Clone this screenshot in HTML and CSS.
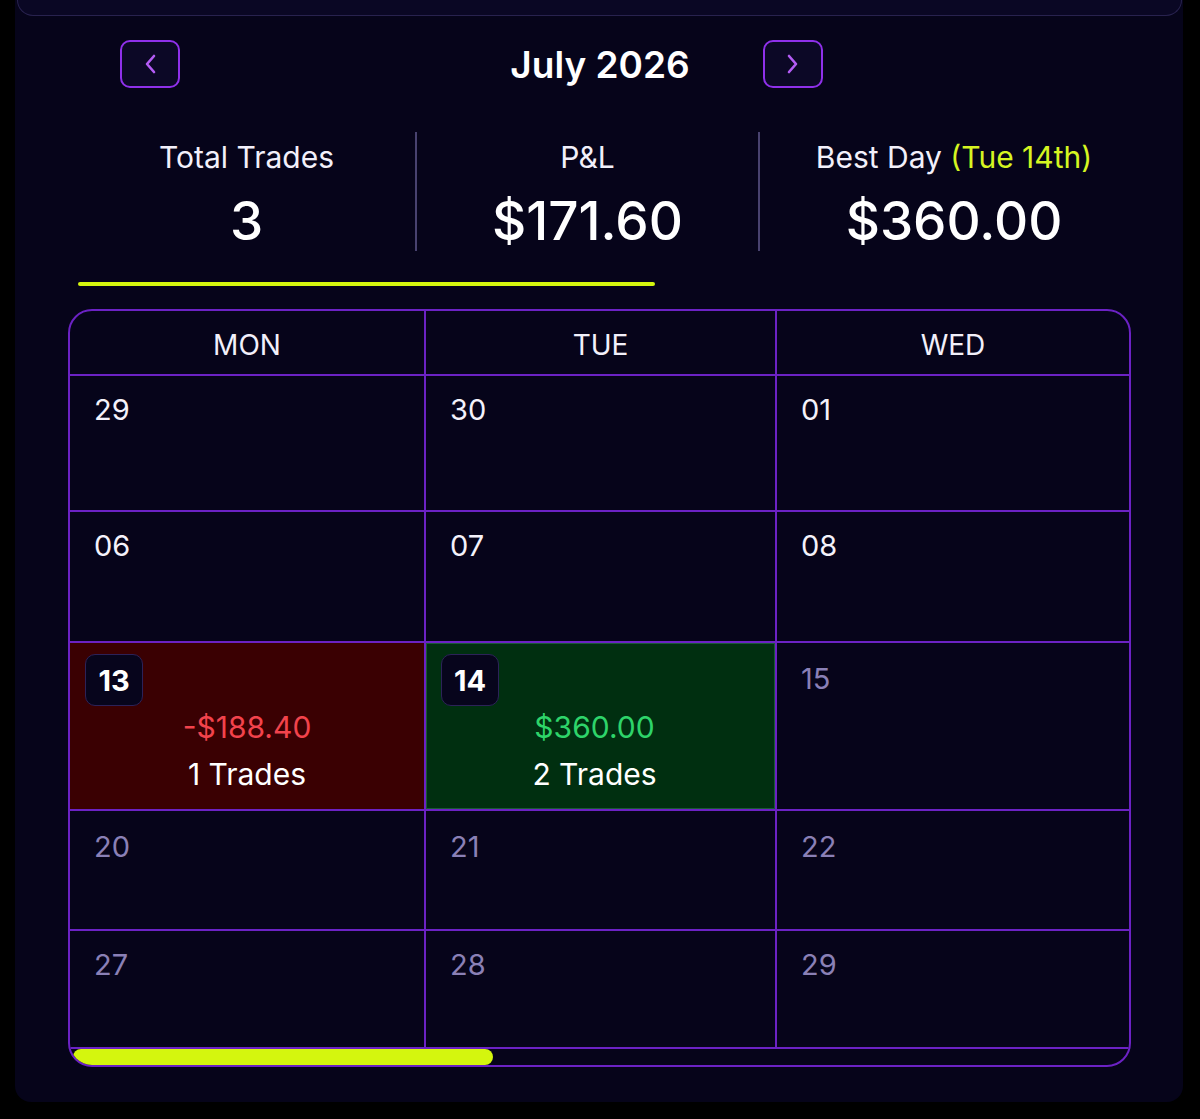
FILE: index.html
```html
<!DOCTYPE html>
<html lang="en">
<head>
    <meta charset="UTF-8">
    <meta name="viewport" content="width=device-width, initial-scale=1.0">
    <title>Trading Calendar</title>
    <link rel="stylesheet" href="styles.css">
</head>
<body>
    <div class="panel">
        <div class="prev-card"></div>

        <div class="month-nav">
            <button class="nav-btn">
                <svg width="14" height="20" viewBox="0 0 14 20"><path d="M11 2 L4 10 L11 18" fill="none" stroke="#b45cf5" stroke-width="2.6" stroke-linecap="round" stroke-linejoin="round"/></svg>
            </button>
            <div class="month-title">July 2026</div>
            <button class="nav-btn next">
                <svg width="14" height="20" viewBox="0 0 14 20"><path d="M3 2 L10 10 L3 18" fill="none" stroke="#b45cf5" stroke-width="2.6" stroke-linecap="round" stroke-linejoin="round"/></svg>
            </button>
        </div>

        <div class="stats">
            <div class="stat">
                <div class="stat-label">Total Trades</div>
                <div class="stat-value">3</div>
            </div>
            <div class="stat">
                <div class="stat-label">P&amp;L</div>
                <div class="stat-value">$171.60</div>
            </div>
            <div class="stat">
                <div class="stat-label">Best Day <span class="hl">(Tue 14th)</span></div>
                <div class="stat-value">$360.00</div>
            </div>
        </div>

        <div class="tab-line"></div>

        <div class="calendar">
            <div class="grid">
                <div class="head">MON</div>
                <div class="head">TUE</div>
                <div class="head last">WED</div>

                <div class="cell r1"><span class="num">29</span></div>
                <div class="cell r1"><span class="num">30</span></div>
                <div class="cell r1 last"><span class="num">01</span></div>

                <div class="cell r2"><span class="num">06</span></div>
                <div class="cell r2"><span class="num">07</span></div>
                <div class="cell r2 last"><span class="num">08</span></div>

                <div class="cell r3 loss">
                    <span class="badge">13</span>
                    <div class="amount red">-$188.40</div>
                    <div class="trades">1 Trades</div>
                </div>
                <div class="cell r3 win">
                    <span class="badge">14</span>
                    <div class="amount green">$360.00</div>
                    <div class="trades">2 Trades</div>
                </div>
                <div class="cell r3 last"><span class="num future">15</span></div>

                <div class="cell r4"><span class="num future">20</span></div>
                <div class="cell r4"><span class="num future">21</span></div>
                <div class="cell r4 last"><span class="num future">22</span></div>

                <div class="cell r5"><span class="num future">27</span></div>
                <div class="cell r5"><span class="num future">28</span></div>
                <div class="cell r5 last"><span class="num future">29</span></div>
            </div>
            <div class="scroll-track">
                <div class="scroll-thumb"></div>
            </div>
        </div>
    </div>
</body>
</html>
```

FILE: styles.css
```css
body {
    margin: 0;
    background-color: #000;
    font-family: Inter, "Noto Sans", sans-serif;
    color: #f2f0fa;
    height: 1119px;
    overflow: hidden;
}

.panel {
    margin-left: 15px;
    width: 1168px;
    height: 1102px;
    box-sizing: border-box;
    background-color: #06041a;
    border-radius: 0 0 16px 16px;
}

/* bottom of the card above */
.prev-card {
    height: 15px;
    margin: 0 1px 0 2px;
    background-color: #0a0724;
    border: 1px solid #28224e;
    border-top: none;
    border-radius: 0 0 16px 16px;
}

.month-nav {
    display: flex;
    align-items: center;
    margin-top: 24px;
    padding-left: 105px;
    height: 48px;
}

.nav-btn {
    width: 60px;
    height: 48px;
    box-sizing: border-box;
    border: 2px solid #8f30ea;
    border-radius: 10px;
    background-color: #0c0826;
    display: flex;
    align-items: center;
    justify-content: center;
    padding: 0;
}

.month-title {
    width: 240px;
    margin-left: 300px;
    text-align: center;
    font-size: 37px;
    font-weight: 600;
    color: #fff;
}

.nav-btn.next {
    margin-left: 43px;
}

.stats {
    display: grid;
    grid-template-columns: 337px 343px 390px;
    margin-top: 44px;
    margin-left: 63px;
    height: 114px;
}

.stat {
    text-align: center;
    padding-top: 7px;
}

.stat + .stat {
    border-left: 2px solid #48426f;
}

.stat-label {
    font-size: 30px;
    line-height: 36px;
}

.stat-label .hl {
    color: #d6f521;
}

.stat-value {
    margin-top: 16px;
    font-size: 53px;
    font-weight: 500;
    line-height: 60px;
    color: #fff;
}

.tab-line {
    margin-top: 36px;
    margin-left: 63px;
    width: 577px;
    height: 4px;
    border-radius: 2px;
    background-color: #d4f60e;
}

.calendar {
    margin: 23px 52px 0 53px;
    border: 2px solid #6b22c4;
    border-radius: 24px;
    overflow: hidden;
}

.grid {
    display: grid;
    grid-template-columns: 356px 351px 1fr;
}

.head {
    height: 65px;
    box-sizing: border-box;
    padding-top: 4px;
    display: flex;
    align-items: center;
    justify-content: center;
    font-size: 28px;
    border-right: 2px solid #6b22c4;
    border-bottom: 2px solid #6b22c4;
}

.cell {
    box-sizing: border-box;
    padding: 17px 24px;
    border-right: 2px solid #6b22c4;
    border-bottom: 2px solid #6b22c4;
}

.head.last,
.cell.last {
    border-right: none;
}

.r1 { height: 136px; }
.r2 { height: 131px; }
.r3 { height: 168px; padding-top: 19px; }
.r4 { height: 120px; padding-top: 19px; }
.r5 { height: 118px; }

.num {
    display: block;
    font-size: 29px;
    line-height: 34px;
    color: #f4f2fb;
}

.num.future {
    color: #8a80b6;
}

.cell.loss,
.cell.win {
    padding: 11px 15px;
    text-align: center;
}

.cell.loss {
    background-color: #3a0002;
}

.cell.win {
    background-color: #002f10;
    box-shadow: inset 0 0 0 1px #1a5a36;
}

.badge {
    display: flex;
    align-items: center;
    justify-content: center;
    width: 58px;
    height: 52px;
    box-sizing: border-box;
    border: 1px solid #2c2258;
    border-radius: 10px;
    background-color: #07051c;
    font-size: 29px;
    font-weight: 700;
    color: #fff;
}

.amount {
    margin-top: 1px;
    font-size: 30px;
    line-height: 40px;
}

.amount.red { color: #f2434c; }
.amount.green { color: #2ed46a; }

.trades {
    margin-top: 7px;
    font-size: 30px;
    line-height: 40px;
    color: #fff;
}

.cell.win .amount,
.cell.win .trades {
    margin-right: 12px;
}

.scroll-track {
    height: 16px;
    padding-left: 3px;
}

.scroll-thumb {
    width: 420px;
    height: 16px;
    border-radius: 8px;
    background-color: #d4f60e;
}
```
